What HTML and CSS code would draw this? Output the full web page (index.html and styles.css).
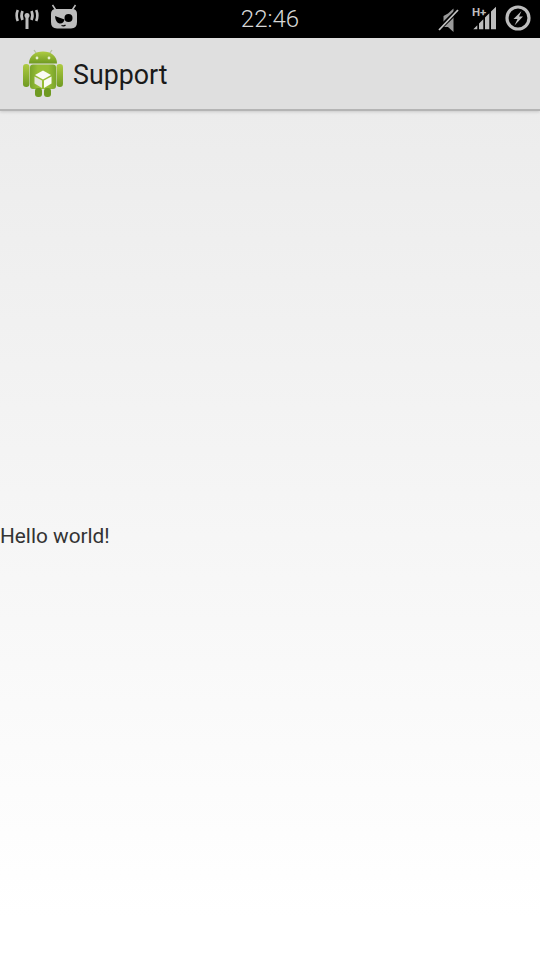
FILE: index.html
```html
<!DOCTYPE html>
<html lang="en">
<head>
    <meta charset="UTF-8">
    <meta name="viewport" content="width=device-width, initial-scale=1.0">
    <title>Support</title>
    <link rel="stylesheet" href="styles.css">
</head>
<body>
    <div class="status-bar">
        <div class="status-left">
            <!-- antenna -->
            <svg class="icon-antenna" width="24" height="24" viewBox="0 0 24 24">
                <path d="M12 9V22" stroke="#bdbdbd" stroke-width="3" fill="none"/>
                <circle cx="12" cy="8.500" r="2.500" fill="#bdbdbd"/>
                <path d="M7.500 4Q5.500 8.500 7.500 13M16.500 4Q18.500 8.500 16.500 13" stroke="#bdbdbd" stroke-width="2.600" fill="none"/>
                <path d="M2.800 3Q0.500 8.500 2.800 14M21.200 3Q23.500 8.500 21.200 14" stroke="#bdbdbd" stroke-width="2.600" fill="none"/>
            </svg>
            <!-- cyanogenmod mascot -->
            <svg class="icon-cid" width="28" height="26" viewBox="0 0 28 26">
                <path d="M2.500 1L6.500 7M25.500 1L21.500 7" stroke="#bdbdbd" stroke-width="1.500"/>
                <path d="M6 5H22Q27 5 27 10V18Q27 24.500 21 24.500H7Q1 24.500 1 18V10Q1 5 6 5Z" fill="#bdbdbd"/>
                <circle cx="18.500" cy="14" r="4" fill="#000"/>
                <path d="M5 12L14.500 15.500Q13.500 20 9.500 19.500Q5.500 18.500 5 12Z" fill="#000"/>
                <path d="M11.500 21.500Q14 22.500 15.500 21" stroke="#000" stroke-width="1.200" fill="none"/>
            </svg>
        </div>
        <div class="clock">22:46</div>
        <div class="status-right">
            <!-- muted speaker -->
            <svg class="icon-mute" width="22" height="26" viewBox="0 0 22 26">
                <path d="M16.500 1.500V25L11 20H6.500V9L11 6.500Z" fill="#9a9a9a"/>
                <path d="M2 22L21 3" stroke="#000" stroke-width="4.500"/>
                <path d="M2 23L21 3" stroke="#c4c4c4" stroke-width="1.800"/>
            </svg>
            <!-- signal, H+ -->
            <svg class="icon-signal" width="26" height="26" viewBox="0 0 26 26">
                <path d="M2.300 24.300L6.300 20.300V24.300ZM8 24.300V18.600L12.300 14.300V24.300ZM14 24.300V12.600L18.300 8.300V24.300ZM20 24.300V6.600L25 1.700V24.300Z" fill="#bdbdbd"/>
                <text class="signal-type" x="1" y="11">H+</text>
            </svg>
            <!-- battery charging -->
            <svg class="icon-battery" width="26" height="26" viewBox="0 0 26 26">
                <circle cx="13" cy="13" r="11" fill="none" stroke="#bdbdbd" stroke-width="3.200"/>
                <path d="M16.500 6L8.500 14H12.500L9.500 20.500L18 11.500H14Z" fill="#bdbdbd"/>
            </svg>
        </div>
    </div>
    <div class="action-bar">
        <!-- app icon -->
        <svg class="app-icon" width="42" height="50" viewBox="0 0 42 50">
            <defs>
                <linearGradient id="droid" x1="0" y1="0" x2="0" y2="1">
                    <stop offset="0" stop-color="#aecb41"/>
                    <stop offset="1" stop-color="#6f9a22"/>
                </linearGradient>
                <linearGradient id="droidBody" x1="0" y1="0" x2="1" y2="0">
                    <stop offset="0" stop-color="#79a42a"/>
                    <stop offset="0.3" stop-color="#98bd36"/>
                    <stop offset="0.7" stop-color="#98bd36"/>
                    <stop offset="1" stop-color="#79a42a"/>
                </linearGradient>
            </defs>
            <path d="M12 3L15.500 8M30 3L26.500 8" stroke="#b5bfa0" stroke-width="1.300"/>
            <path d="M7 16.500C7 9 13 4.500 21 4.500C29 4.500 35 9 35 16.500Z" fill="url(#droid)"/>
            <circle cx="15" cy="11" r="1.400" fill="#e8efcf"/>
            <circle cx="27" cy="11" r="1.400" fill="#e8efcf"/>
            <rect x="1" y="17" width="6.500" height="23" rx="3.200" fill="url(#droid)"/>
            <rect x="34.500" y="17" width="6.500" height="23" rx="3.200" fill="url(#droid)"/>
            <rect x="8" y="17.500" width="26" height="24.500" rx="3" fill="url(#droidBody)"/>
            <rect x="13" y="41" width="7" height="9" rx="3" fill="#6f9a22"/>
            <rect x="22" y="41" width="7" height="9" rx="3" fill="#6f9a22"/>
            <path d="M21 23.500L29 28L21 32.500L13 28Z" fill="#fbfbf5"/>
            <path d="M12.500 29.500L20 33.500V41L12.500 36.500Z" fill="#e6e6dc"/>
            <path d="M29.500 29.500L22 33.500V41L29.500 36.500Z" fill="#fbfbf5"/>
        </svg>
        <div class="action-title">Support</div>
    </div>
    <div class="content">
        <div class="hello">Hello world!</div>
    </div>
</body>
</html>
```

FILE: styles.css
```css
html, body {
    height: 100%;
}
body {
    margin: 0;
    font-family: Roboto, "Liberation Sans", sans-serif;
    display: flex;
    flex-direction: column;
    overflow: hidden;
    background-color: #fff;
}
.status-bar {
    height: 38px;
    flex: none;
    background-color: #000;
    display: flex;
    align-items: center;
    justify-content: space-between;
    position: relative;
}
.status-left {
    display: flex;
    align-items: flex-start;
    gap: 11px;
    padding-left: 15px;
    height: 38px;
    box-sizing: border-box;
    padding-top: 4px;
}
.icon-antenna {
    margin-top: 3px;
}
.clock {
    position: absolute;
    left: 0;
    right: 0;
    top: 5px;
    text-align: center;
    font-size: 24px;
    line-height: 28px;
    font-weight: 300;
    color: #d8d8d8;
}
.status-right {
    display: flex;
    align-items: flex-start;
    height: 38px;
    box-sizing: border-box;
    padding-top: 4px;
    padding-right: 9px;
}
.icon-mute {
    margin-top: 3px;
    margin-right: 12px;
}
.icon-signal {
    margin-top: 1px;
    margin-right: 8px;
}
.icon-battery {
    margin-top: 1px;
}
.signal-type {
    font-family: Roboto, "Liberation Sans", sans-serif;
    font-size: 11.5px;
    font-weight: 700;
    fill: #bdbdbd;
}
.action-bar {
    height: 71px;
    flex: none;
    display: flex;
    align-items: center;
    padding-left: 22px;
    background-color: #dfdfdf;
    border-bottom: 2px solid #b4b4b4;
    box-shadow: 0 1px 3px rgba(0, 0, 0, 0.15);
    position: relative;
}
.app-icon {
    margin-top: -4px;
    margin-right: 9px;
}
.action-title {
    font-size: 26.8px;
    color: #1a1a1a;
    margin-top: 2px;
}
.content {
    flex: 1;
    display: flex;
    flex-direction: column;
    justify-content: center;
    background: linear-gradient(#ececec, #ffffff 95%);
}
.hello {
    font-size: 20.8px;
    color: #333;
    line-height: 28px;
}
```
